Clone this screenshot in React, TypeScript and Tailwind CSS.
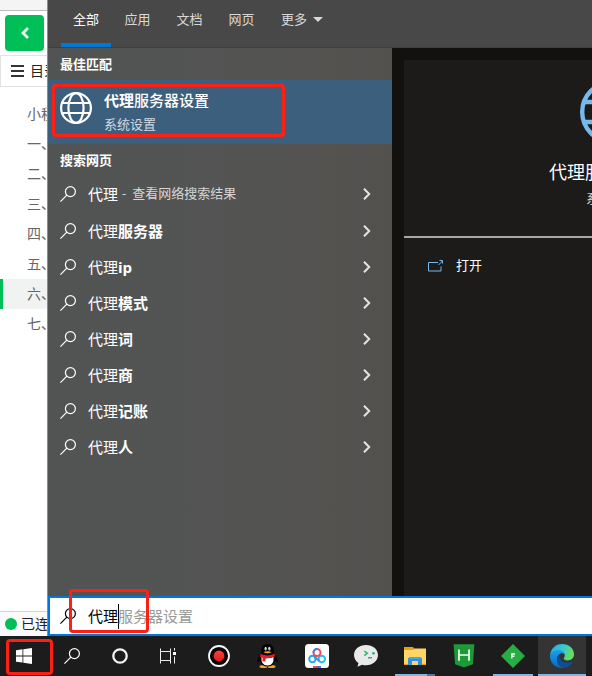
import React, { useState } from "react";

type IconProps = { className?: string };

function Globe({ className }: IconProps) {
  return (
    <svg viewBox="0 0 32 32" fill="none" stroke="currentColor" strokeWidth="2.2" className={className} aria-hidden="true">
      <circle cx="16" cy="16" r="14.9" />
      <ellipse cx="16" cy="16" rx="7.6" ry="14.9" />
      <path d="M2 11h28M2 21h28" />
    </svg>
  );
}

function Magnifier({ className }: IconProps) {
  return (
    <svg viewBox="0 0 16 16" fill="none" stroke="currentColor" strokeWidth="1.2" className={className} aria-hidden="true">
      <circle cx="10.4" cy="5.6" r="5" />
      <path d="M6.8 9.2L.4 15.6" />
    </svg>
  );
}

function Chevron() {
  return (
    <svg viewBox="0 0 8 12" fill="none" stroke="#e4e4e4" strokeWidth="2" className="h-3 w-2" aria-hidden="true">
      <path d="M1 .8L6.2 6 1 11.2" />
    </svg>
  );
}

function WindowsLogo() {
  return (
    <svg viewBox="0 0 16 16" fill="#fff" className="size-4">
      <path d="M0 2.2L6.5 1.3v6.2H0zM7.3 1.2L16 0v7.5H7.3zM0 8.4h6.5v6.2L0 13.700zM7.300 8.400H16V16l-8.700-1.200z" />
    </svg>
  );
}

function CortanaRing() {
  return (
    <svg viewBox="0 0 16 16" fill="none" className="size-4">
      <circle cx="8" cy="8" r="6.7" stroke="#f2f2f2" strokeWidth="2.3" />
    </svg>
  );
}

function TaskView() {
  return (
    <svg viewBox="0 0 17 16" fill="none" stroke="#eee" strokeWidth="1" className="h-4 w-[17px]">
      <path d="M.5 .5v3h10v-3M.5 15.500v-3h10v3M.5 3.500v9M10.500 3.500v9M14.500 0v2.500M14.500 8.500V15.500" />
      <path d="M13 4h3v3h-3z" fill="#fff" stroke="none" />
    </svg>
  );
}

function Recorder() {
  return (
    <svg viewBox="0 0 24 24" className="size-6">
      <defs>
        <linearGradient id="rec" x1="0" y1="0" x2="0" y2="1">
          <stop stopColor="#ff4038" />
          <stop offset="1" stopColor="#e01c1c" />
        </linearGradient>
      </defs>
      <circle cx="12" cy="12" r="10" fill="#080505" stroke="#f7f7f7" strokeWidth="1.8" />
      <circle cx="12" cy="12" r="5.400" fill="url(#rec)" />
    </svg>
  );
}

function Penguin() {
  return (
    <svg viewBox="0 0 24 26" className="h-[26px] w-6">
      <ellipse cx="7.500" cy="23.400" rx="4" ry="1.500" fill="#f5a623" />
      <ellipse cx="15.500" cy="23.400" rx="4" ry="1.500" fill="#f5a623" />
      <path d="M4.800 11Q1 14.500 1.400 19q1 1 3-1.700zM18.200 11Q22 14.500 21.600 19q-1 1-3-1.700z" fill="#050505" />
      <path d="M11.500 1C6.800 1 5 4.200 5.200 8.500L4 13v5q2 5.500 7.500 5.500T19 18v-5l-1.200-4.500C18 4.200 16.200 1 11.500 1z" fill="#050505" />
      <path d="M5.500 14q6 2.500 12 0 .8 8.500-6 8.500T5.500 14z" fill="#fff" />
      <ellipse cx="9.700" cy="5.700" rx="1.200" ry="1.700" fill="#fff" />
      <ellipse cx="13.300" cy="5.700" rx="1.200" ry="1.700" fill="#fff" />
      <circle cx="10" cy="6" r=".6" />
      <circle cx="13" cy="6" r=".6" />
      <path d="M7.300 9q4.200-1.500 8.400 0-4.200 2.600-8.400 0z" fill="#f8a51c" />
      <path d="M4.500 10.800q7 3.200 14 0l.5 2.500q-4.500 2-9.200 1.900l-.5 3.400-3-.3.400-3.600-2.600-1z" fill="#e21e2a" />
    </svg>
  );
}

function CloudDisk() {
  return (
    <svg viewBox="0 0 24 24" className="size-6">
      <rect width="24" height="24" rx="3.500" fill="#fff" />
      <g fill="none" strokeWidth="2">
        <circle cx="7.400" cy="15" r="3.200" stroke="#22a7f2" />
        <circle cx="16.800" cy="15" r="3.200" stroke="#22c3f5" />
        <circle cx="12" cy="8.600" r="3.500" stroke="#f5455a" />
        <path d="M8.500 8.600A3.500 3.500 0 0 1 12 5.100" stroke="#278cf5" />
        <path d="M9.600 12.700l4.900 4.600" stroke="#2898f2" />
      </g>
      <path d="M8 22h4v2H8z" fill="#f0475b" />
      <path d="M12 22h4v2h-4z" fill="#3478ee" />
    </svg>
  );
}

function DevTools() {
  return (
    <svg viewBox="0 0 24 24" className="size-6">
      <path d="M12 1C5.200 1 0 5.300 0 11c0 3.300 1.700 6.100 4.400 8l-.9 3.700 4.600-2q2 .5 3.900.5c6.800 0 12-4.400 12-10.200S18.800 1 12 1z" fill="#e9e9e9" />
      <path d="M10.300 7l3 2.300-3 2.300M14 13.800h4" fill="none" stroke="#27b56b" strokeWidth="1.500" />
      <circle cx="19.500" cy="9.300" r="1.400" fill="#27b56b" />
    </svg>
  );
}

function Folder() {
  return (
    <svg viewBox="0 0 22 20" className="h-5 w-[22px]">
      <path d="M0 1h9l1.500 2H22v16H0z" fill="#e8a30b" />
      <path d="M0 4h9l1.500-1.500H22V18H0z" fill="#ffd565" />
      <path d="M4 12h14v7H4z" fill="#3490dc" />
      <path d="M5 11h12v2H5z" fill="#4ba6e8" />
      <path d="M8 15h6v4H8z" fill="#ffd565" />
    </svg>
  );
}

function HBuilder() {
  return (
    <svg viewBox="0 0 22 24" className="h-6 w-[22px]">
      <path d="M.6 .3h20.800l-1.500 20L11 23.500 2.100 20.300z" fill="#1b9a35" />
      <path d="M6 5.500v11.200M16 5.500v11.200M6 11h10" fill="none" stroke="#f1fff1" strokeWidth="1.700" />
    </svg>
  );
}

function Diamond() {
  return (
    <svg viewBox="0 0 24 24" className="size-6">
      <path d="M12 0l12 12-12 12L0 12z" fill="#27ad43" />
      <path d="M10.800 14.500V10h3.200M10.800 12.200h2.700" fill="none" stroke="#e6ffe9" strokeWidth="1.500" />
    </svg>
  );
}

function Edge() {
  return (
    <svg viewBox="0 0 24 24" className="size-6">
      <defs>
        <linearGradient id="edgeTop" x1="0" y1=".2" x2="1" y2=".5">
          <stop stopColor="#2aa9e6" />
          <stop offset=".5" stopColor="#35c7d5" />
          <stop offset="1" stopColor="#6be04d" />
        </linearGradient>
        <linearGradient id="edgeSide" x1="0" y1="0" x2="0" y2="1">
          <stop stopColor="#1da0e8" />
          <stop offset="1" stopColor="#0967c4" />
        </linearGradient>
      </defs>
      <path d="M0 11.500C.8 4.500 5.500 0 12 0c7 0 12 4.800 12 10.300 0 4-3 6.200-6.300 6.200-2.700 0-4.300-1-3.900-2.200.4-.8 1-1.400 1-2.700C14.800 8.800 12 6.800 8.300 6.800 4.600 6.800 1.500 8.600 0 11.500z" fill="url(#edgeTop)" />
      <path d="M0 12C.8 8.500 4 6 7.800 6c3.500 0 6 1.600 6.800 4.200-1-.9-2-1.200-3.100-1C8.800 9.800 7 12 7 15.200c0 4.200 2.700 7.500 6.600 8.600C6 24.800 0 19.200 0 12z" fill="url(#edgeSide)" />
      <path d="M9.600 11C7.500 12.200 6.800 14 7 16c.4 4 3.500 7.300 7.600 7.700 3.400-.5 6.500-2.600 8-5.500.2-.5-.2-.8-.7-.5-5.400 2.700-13 .3-12.300-6.700z" fill="#0c4f97" />
    </svg>
  );
}

const chapters = ["小程序", "一、", "二、", "三、", "四、", "五、", "六、", "七、"];
const tabs = ["全部", "应用", "文档", "网页"];
const suggestions = ["服务器", "ip", "模式", "词", "商", "记账", "人"];

const systemButtons = [
  { name: "开始", icon: <WindowsLogo />, marked: true },
  { name: "搜索", icon: <Magnifier className="size-4 text-white" /> },
  { name: "Cortana", icon: <CortanaRing /> },
  { name: "任务视图", icon: <TaskView /> },
];

const apps = [
  { name: "录屏", icon: <Recorder />, line: "" },
  { name: "QQ", icon: <Penguin />, line: "" },
  { name: "网盘", icon: <CloudDisk />, line: "" },
  { name: "开发者工具", icon: <DevTools />, line: "" },
  { name: "文件资源管理器", icon: <Folder />, line: "stack" },
  { name: "HBuilder", icon: <HBuilder />, line: "" },
  { name: "FinalShell", icon: <Diamond />, line: "open" },
  { name: "Edge", icon: <Edge />, line: "active" },
];

function Sidebar() {
  return (
    <aside className="flex w-12 shrink-0 flex-col overflow-hidden whitespace-nowrap border-r border-[#8c8c8c] bg-white text-sm text-[#666]">
      <div className="h-[11px] shrink-0 border-b border-[#bdbdbd] bg-[#f4f4f4]" />
      <div className="h-11 shrink-0 pl-[5px] pt-1">
        <button aria-label="返回" className="flex h-9 w-[39px] items-center justify-center rounded bg-[#00bf57]">
          <svg viewBox="0 0 8 12" fill="none" stroke="#e9fff2" strokeWidth="2.800" className="h-3 w-2" aria-hidden="true">
            <path d="M7 1L2 6l5 5" />
          </svg>
        </button>
      </div>
      <button className="flex h-8 w-20 shrink-0 items-center gap-1.5 border border-[#e2e2e2] pl-2.5 text-[#222]">
        <svg viewBox="0 0 13 12" stroke="#333" strokeWidth="2" className="h-3 w-[13px] shrink-0" aria-hidden="true">
          <path d="M0 1h13M0 6h13M0 11h13" />
        </svg>
        目录
      </button>
      <nav className="flex flex-1 flex-col pt-3">
        {chapters.map((c) => (
          <a
            key={c}
            href="#chapter"
            className={
              c === "六、"
                ? "h-[30px] border-l-[3px] border-[#00bf57] bg-[#f1f3f2] pl-6 leading-[30px]"
                : "h-[30px] border-l-[3px] border-transparent pl-6 leading-[30px]"
            }
          >
            {c}
          </a>
        ))}
      </nav>
      <div className="flex h-[25px] shrink-0 items-center gap-1 border-t border-[#d4d4d4] bg-[#fafafa] pl-[5px] text-[#222]">
        <span className="size-3 shrink-0 rounded-full bg-[#00bf57]" />
        已连接
      </div>
    </aside>
  );
}

function Results() {
  return (
    <section className="w-[344px] shrink-0 bg-linear-to-r from-[#525453] via-[#535453] to-[#53514e] text-[15px] text-white">
      <h2 className="h-8 pl-3 text-[13px] font-bold leading-8">最佳匹配</h2>
      <div className="relative h-16 bg-[#3c5f7e]">
        <button className="flex h-full w-full items-center gap-3 px-3 pb-2 text-left">
          <Globe className="size-8" />
          <span className="flex flex-col pt-2">
            <span className="leading-6">
              <b>代理</b>
              <span className="font-medium">服务器设置</span>
            </span>
            <span className="text-[13px] leading-6 text-[#d3dbe2]">系统设置</span>
          </span>
        </button>
        <div className="pointer-events-none absolute left-1 top-1 h-[53px] w-[233px] rounded border-3 border-[#ff2015]" />
      </div>
      <h2 className="h-8 pl-3 text-[13px] font-bold leading-8">搜索网页</h2>
      <ul>
        <li className="mb-px">
          <button className="flex h-9 w-full items-center pl-3 pr-[21px]">
            <Magnifier className="mr-3 size-4" />
            <span>代理</span>
            <span className="flex flex-1 gap-1.5 pl-1 text-left text-[13px] text-[#d6d6d6]">
              <span>-</span>
              <span>查看网络搜索结果</span>
            </span>
            <Chevron />
          </button>
        </li>
        {suggestions.map((s) => (
          <li key={s}>
            <button className="flex h-9 w-full items-center pl-3 pr-[21px]">
              <Magnifier className="mr-3 size-4" />
              <span className="flex-1 text-left">
                代理<b>{s}</b>
              </span>
              <Chevron />
            </button>
          </li>
        ))}
      </ul>
    </section>
  );
}

function Preview() {
  return (
    <section className="min-w-0 flex-1 overflow-hidden bg-[#12110f] pl-3 pt-3">
      <div className="h-full w-[416px] bg-[#1c1b19] text-white">
        <div className="flex h-[178px] flex-col items-center border-b-2 border-[#a8a7a6] pt-5">
          <Globe className="size-16 text-[#76b9ed]" />
          <h1 className="mt-4 text-lg leading-6">代理服务器设置</h1>
          <p className="text-[13px] leading-7 text-[#ccc]">系统设置</p>
        </div>
        <button className="flex h-14 items-center gap-3 pl-6 text-[13px]">
          <svg viewBox="0 0 16 12" fill="none" stroke="#76b9ed" className="h-3 w-4" aria-hidden="true">
            <path d="M10 2.500H.5v8.500h12.500V6.500M10.500 5L14.500 1M11.500 .5h3v3" />
          </svg>
          打开
        </button>
      </div>
    </section>
  );
}

export default function App() {
  const [query, setQuery] = useState("代理");

  return (
    <div className="flex min-h-screen flex-col overflow-hidden bg-white font-['Open_Sans','Noto_Sans_CJK_SC',sans-serif]">
      <div className="flex flex-1">
        <Sidebar />
        <main className="flex min-w-0 flex-1 flex-col">
          <header className="flex h-12 shrink-0 gap-px border-b border-[#3f3f3f] bg-[#484848] pl-[13px] text-[13px] text-[#d8d8d8]">
            {tabs.map((t, i) => (
              <button
                key={t}
                className={
                  i === 0
                    ? "w-[50px] border-b-4 border-[#0078d7] pb-1 text-white"
                    : "w-[51px] border-b-4 border-transparent pb-1"
                }
              >
                {t}
              </button>
            ))}
            <button className="flex items-center gap-1.5 pb-2 pl-[13px]">
              更多
              <svg viewBox="0 0 10 5" fill="#d8d8d8" className="h-[5px] w-2.5" aria-hidden="true">
                <path d="M0 0h10L5 5z" />
              </svg>
            </button>
          </header>
          <div className="flex flex-1">
            <Results />
            <Preview />
          </div>
          <div className="relative flex h-10 shrink-0 items-center border-2 border-r-0 border-[#0078d7] bg-white pl-2.5 text-[15px]">
            <label htmlFor="query" aria-label="搜索" className="mr-3">
              <Magnifier className="size-4 text-black" />
            </label>
            <input
              id="query"
              value={query}
              onChange={(e) => setQuery(e.target.value)}
              className="w-[30px] text-black outline-none"
            />
            <span className="-mr-px h-[25px] w-px bg-black" />
            <span className="text-[#999]">服务器设置</span>
            <div className="pointer-events-none absolute -top-[9px] left-[19px] h-11 w-20 rounded border-3 border-[#ff2015]" />
          </div>
        </main>
      </div>
      <footer className="flex h-10 shrink-0 overflow-hidden bg-[#1c1c1c]">
        <div className="mr-[3px] flex">
          {systemButtons.map((b) => (
            <button key={b.name} aria-label={b.name} className="relative flex w-12 shrink-0 items-center justify-center">
              {b.icon}
              {b.marked && (
                <span className="pointer-events-none absolute left-1.5 top-[3px] h-9 w-[47px] rounded border-3 border-[#ff2015]" />
              )}
            </button>
          ))}
        </div>
        <div className="flex gap-px">
          {apps.map((a) => (
            <button
              key={a.name}
              aria-label={a.name}
              className={
                a.line === "active"
                  ? "relative flex w-12 shrink-0 items-center justify-center bg-[#343434]"
                  : "relative flex w-12 shrink-0 items-center justify-center"
              }
            >
              {a.icon}
              {a.line === "active" && <span className="absolute inset-x-0 bottom-0 h-0.5 bg-[#76b9ed]" />}
              {a.line === "open" && <span className="absolute inset-x-1 bottom-0 h-0.5 bg-[#76b9ed]" />}
              {a.line === "stack" && (
                <span className="absolute inset-x-1 bottom-0 h-0.5 border-r-8 border-[#4f7797] bg-[#76b9ed]" />
              )}
            </button>
          ))}
        </div>
      </footer>
    </div>
  );
}
